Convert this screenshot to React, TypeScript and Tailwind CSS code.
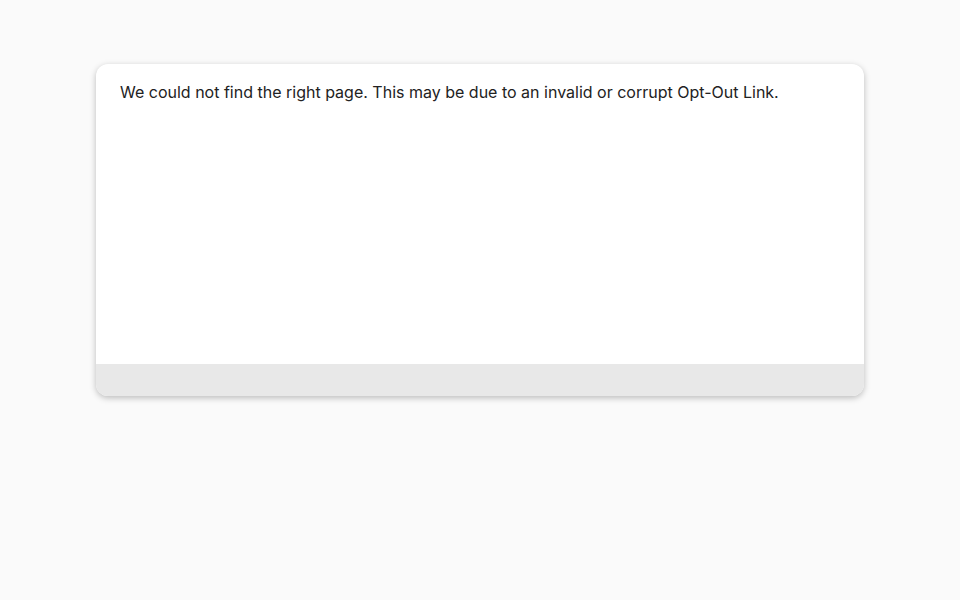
export default function App() {
  return (
    <div className="min-h-screen bg-[#fafafa] pt-16" style={{ fontFamily: 'Inter, "Noto Sans", sans-serif' }}>
      <div className="mx-auto w-[768px] overflow-hidden rounded-xl bg-white shadow-[0_2px_6px_rgba(0,0,0,0.25)]">
        <div className="h-[300px] px-6 pt-4">
          <p className="text-base leading-6 text-[#222222]">
            We could not find the right page. This may be due to an invalid or corrupt Opt-Out Link.
          </p>
        </div>
        <div className="h-8 bg-[#e8e8e8]" />
      </div>
    </div>
  );
}
